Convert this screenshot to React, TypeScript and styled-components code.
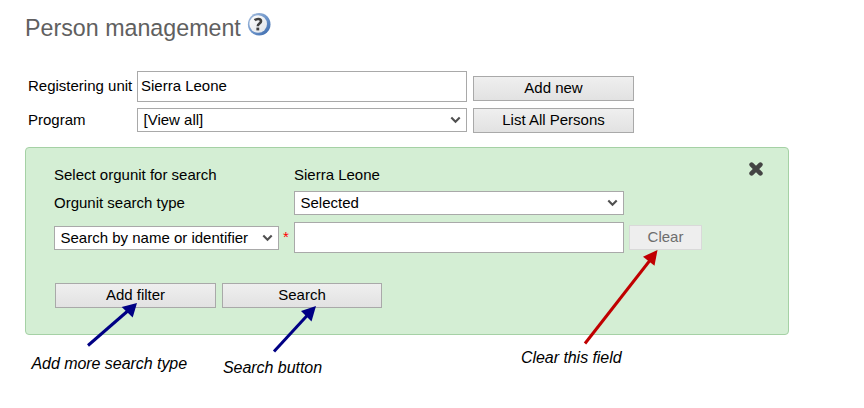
import React from "react";
import styled, { createGlobalStyle, css } from "styled-components";

const GlobalStyle = createGlobalStyle`
  * { box-sizing: border-box; }
  body {
    margin: 0;
    background: #fff;
    color: #000;
    font: 15px/20px "Liberation Sans", Arial, sans-serif;
  }
`;

const Page = styled.main`
  position: relative;
  width: 864px;
  height: 408px;
  padding: 9px 0 0 25px;
  overflow: hidden;
`;

const Header = styled.header`
  display: flex;
  align-items: flex-start;
  gap: 6px;
  height: 62px;
`;

const Title = styled.h1`
  margin: 5px 0 0;
  font-size: 23.25px;
  line-height: 28px;
  font-weight: 400;
  color: #606060;
  white-space: nowrap;
`;

const HelpIcon = styled.svg`
  display: block;
  margin-top: 3px;
`;

const Registration = styled.form`
  display: grid;
  grid-template-columns: 109px 330px 161px;
  grid-template-rows: 31px 25px;
  column-gap: 3px;
  row-gap: 6px;
`;

const Label = styled.label<{ $top?: number }>`
  display: block;
  padding-top: ${(p) => p.$top ?? 2}px;
  white-space: nowrap;
`;

const FormLabel = styled(Label)`
  padding-left: 3px;
`;

const fieldFrame = css`
  width: 100%;
  border: 1px solid #a9a9a9;
  background: #fff;
  color: #000;
  font: inherit;
  border-radius: 0;
  outline: none;
`;

const TextInput = styled.input`
  ${fieldFrame}
  display: block;
  height: 31px;
  padding: 0 3px 2px;
`;

const SelectFrame = styled.div`
  ${fieldFrame}
  display: flex;
  align-items: center;
  justify-content: space-between;
  height: 24px;
  padding: 0 5px 0 5.5px;
  white-space: nowrap;
`;

const Button = styled.button<{ $width?: number }>`
  width: ${(p) => p.$width ?? 161}px;
  height: 25px;
  padding: 0 0 1px;
  border: 1px solid #a9a9a9;
  background: linear-gradient(#efefef, #e2e2e2);
  color: #000;
  font: inherit;
  line-height: 20px;

  &:disabled {
    border-color: #d9d9d9;
    background: #eeeeee;
    color: #6d6d6d;
  }
`;

const FormButton = styled(Button)`
  align-self: end;
  margin-left: 3px;
`;

const RaisedButton = styled(FormButton)`
  margin-bottom: 1px;
`;

const Panel = styled.section`
  display: flex;
  align-items: flex-start;
  width: 764px;
  height: 188px;
  margin-top: 14px;
  padding: 15px 25px 0 28px;
  border: 1px solid #a5d1a5;
  border-radius: 4px;
  background: #d4eed4;
`;

const PanelBody = styled.div`
  flex: 1;
`;

const SearchGrid = styled.div`
  display: grid;
  grid-template-columns: 225px 330px 73px;
  grid-template-rows: 24px 27px 31px;
  column-gap: 15px;
  row-gap: 4px;
`;

const Criterion = styled.div`
  display: flex;
  align-items: flex-start;
  width: 240px;
  padding-top: 4px;

  ${SelectFrame} { flex: 0 0 225px; }
`;

const Required = styled.span`
  margin: 1px 0 0 4px;
  font-size: 15px;
  color: #f00;
`;

const ClearCell = styled.div`
  grid-column: 3;
  margin: 3px 0 0 -10px;
`;

const Actions = styled.div`
  display: flex;
  gap: 6px;
  margin: 30px 0 0 1px;
`;

const CloseButton = styled.button`
  margin: -1px 0 0;
  padding: 0;
  border: 0;
  background: none;
  line-height: 0;
`;

const Annotations = styled.svg`
  position: absolute;
  inset: 0;
  pointer-events: none;
`;

const Caption = styled.span<{ $x: number; $y: number }>`
  position: absolute;
  left: ${(p) => p.$x}px;
  top: ${(p) => p.$y}px;
  font-size: 16px;
  line-height: 20px;
  font-style: italic;
  letter-spacing: -0.05px;
  white-space: nowrap;
`;

function Select({ value }: { value: string }) {
  return (
    <SelectFrame role="combobox" aria-label={value}>
      <span>{value}</span>
      <svg width="11" height="8" viewBox="0 0 11 8" fill="none">
        <path d="M1.3 1.4 5.5 5.7 9.7 1.4" stroke="#505050" strokeWidth="2.1" />
      </svg>
    </SelectFrame>
  );
}

function Help() {
  return (
    <HelpIcon width="24" height="24" viewBox="0 0 24 24">
      <defs>
        <linearGradient id="ring" x1="0" y1="0" x2="1" y2="1">
          <stop offset="0" stopColor="#a9c0de" />
          <stop offset="0.55" stopColor="#6a92c8" />
          <stop offset="1" stopColor="#3464a9" />
        </linearGradient>
        <linearGradient id="face" x1="0" y1="0" x2="1" y2="1">
          <stop offset="0" stopColor="#ffffff" />
          <stop offset="1" stopColor="#dfe3e8" />
        </linearGradient>
      </defs>
      <circle cx="12.2" cy="12.2" r="11.3" fill="url(#ring)" />
      <circle cx="11.2" cy="12" r="8.8" fill="url(#face)" />
      <path
        d="M7.8 8.3C9.2 6.7 14 6.2 14 9.2C14 11.6 10.8 11.4 10.8 14.2"
        fill="none"
        stroke="#404040"
        strokeWidth="2.6"
      />
      <rect x="9.4" y="15.6" width="2.8" height="2.8" fill="#404040" />
    </HelpIcon>
  );
}

export default function App() {
  return (
    <>
      <GlobalStyle />
      <Page>
        <Header>
          <Title>Person management</Title>
          <Help />
        </Header>

        <Registration>
          <FormLabel $top={5}>Registering unit</FormLabel>
          <TextInput defaultValue="Sierra Leone" />
          <RaisedButton type="button">Add new</RaisedButton>
          <FormLabel>Program</FormLabel>
          <Select value="[View all]" />
          <FormButton type="button">List All Persons</FormButton>
        </Registration>

        <Panel>
          <PanelBody>
            <SearchGrid>
              <Label>Select orgunit for search</Label>
              <Label as="span">Sierra Leone</Label>
              <span />
              <Label>Orgunit search type</Label>
              <Select value="Selected" />
              <span />
              <Criterion>
                <Select value="Search by name or identifier" />
                <Required>*</Required>
              </Criterion>
              <TextInput />
              <ClearCell>
                <Button type="button" disabled $width={73}>Clear</Button>
              </ClearCell>
            </SearchGrid>
            <Actions>
              <Button type="button">Add filter</Button>
              <Button type="button" $width={160}>Search</Button>
            </Actions>
          </PanelBody>
          <CloseButton type="button" aria-label="Close">
            <svg width="14" height="14" viewBox="0 0 14 14">
              <path d="M2.6 2.6 11.4 11.4M11.4 2.6 2.6 11.4" stroke="#444" strokeWidth="4.6" strokeLinecap="round" />
            </svg>
          </CloseButton>
        </Panel>

        <Annotations width="864" height="408" viewBox="0 0 864 408">
          <g stroke="#000084" fill="#000084">
            <path d="M88 345.5 130 309" strokeWidth="3" />
            <path d="M137 303 121.7 307 132.7 317.5Z" stroke="none" />
            <path d="M274 351.5 309 313.5" strokeWidth="3" />
            <path d="M316 306 301 311 311.5 321.5Z" stroke="none" />
          </g>
          <g stroke="#c00000" fill="#c00000">
            <path d="M585 343.5 651 259" strokeWidth="3" />
            <path d="M657.5 250 643 256.7 654.5 265.7Z" stroke="none" />
          </g>
        </Annotations>
        <Caption $x={31.5} $y={354}>Add more search type</Caption>
        <Caption $x={223} $y={358}>Search button</Caption>
        <Caption $x={521} $y={348}>Clear this field</Caption>
      </Page>
    </>
  );
}
